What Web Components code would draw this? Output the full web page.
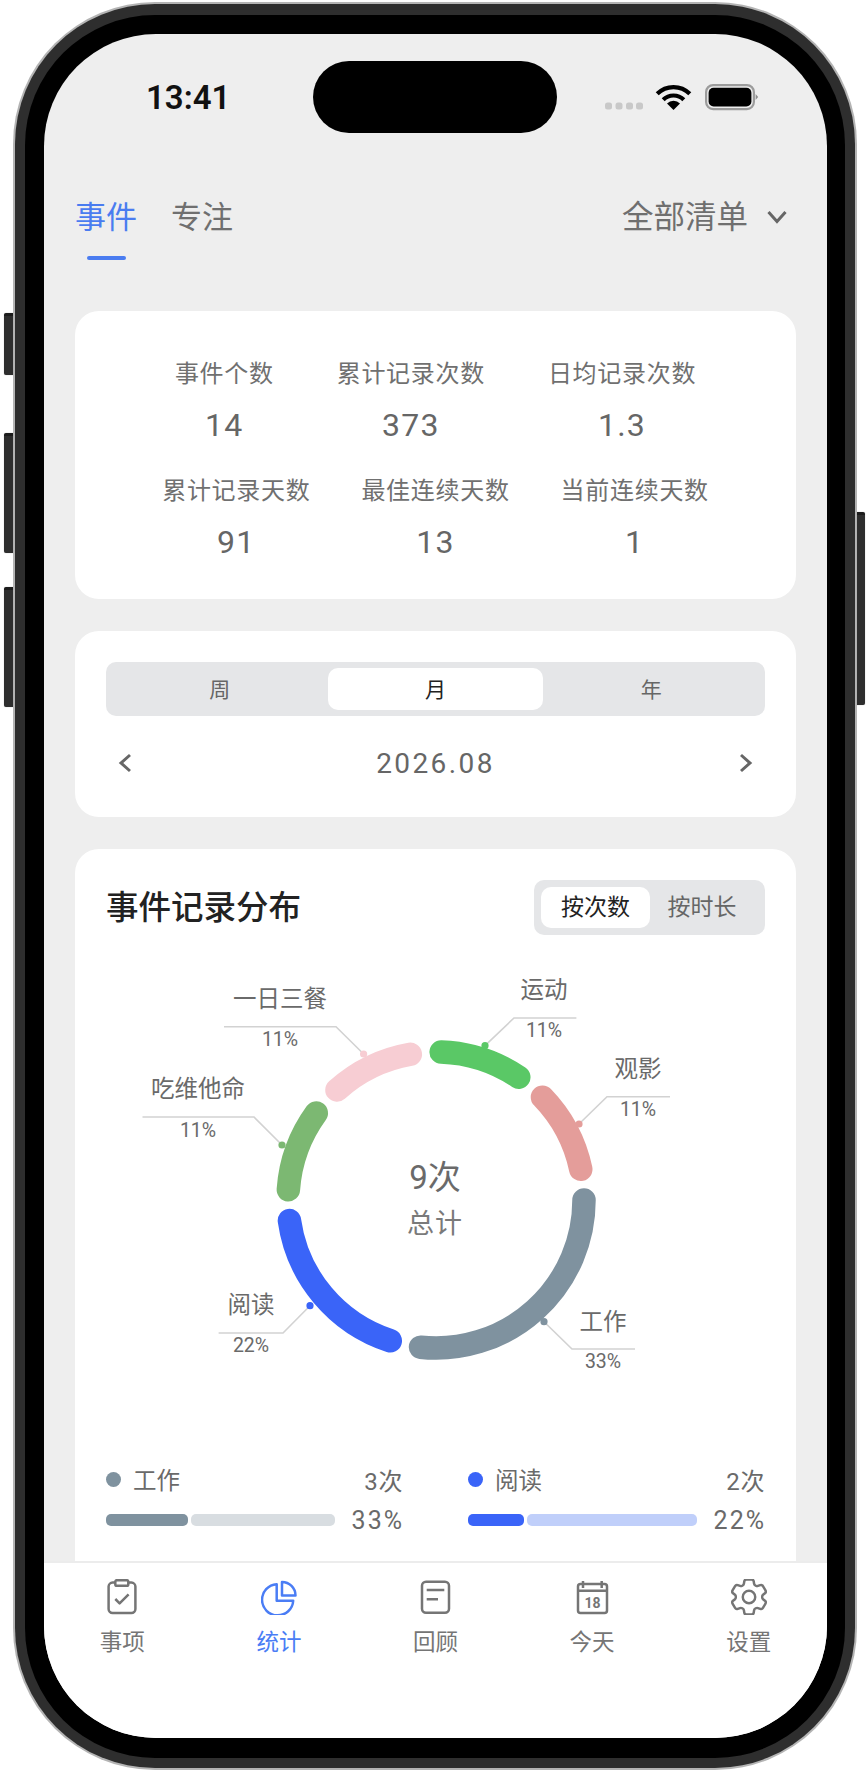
<!DOCTYPE html>
<html lang="zh-CN">
<head>
<meta charset="utf-8">
<title>统计</title>
<style>
  html, body {
    margin: 0;
    padding: 0;
    background: #fff;
    font-family: Roboto, "Noto Sans CJK SC", sans-serif;
  }
</style>
</head>
<body>
<phone-frame>
  <status-bar slot="head"></status-bar>
  <top-tabs slot="head"></top-tabs>
  <stats-card></stats-card>
  <period-card></period-card>
  <dist-card></dist-card>
  <tab-bar slot="footer"></tab-bar>
</phone-frame>

<script>
const FONT = `Roboto, "Noto Sans CJK SC", sans-serif`;

class PhoneFrame extends HTMLElement {
  constructor() {
    super();
    this.attachShadow({ mode: "open" });
    this.shadowRoot.innerHTML = `
      <style>
        :host {
          display: block;
          position: relative;
          width: 844px;
          height: 1768px;
          margin: 2px 0 0 13px;
          box-sizing: border-box;
          padding: 2px;
          border-radius: 142px;
          background: #b4b4b4;
        }
        .side {
          position: absolute;
          width: 9px;
          background: #2e2e2e;
          border-top: 3px solid #1c1c1c;
          box-sizing: border-box;
          box-shadow: 0 0 1px #999;
          border-radius: 2px 0 0 2px;
        }
        .side.l { left: -9px; }
        .side.r { right: -8px; width: 8px; border-radius: 0 2px 2px 0; }
        .dark {
          padding: 11px 10px 10px 10px;
          border-radius: 140px;
          background: #2e2e2e;
          height: 100%;
          box-sizing: border-box;
        }
        .black {
          padding: 19px 18px 19px 19px;
          border-radius: 130px;
          background: #000;
          height: 100%;
          box-sizing: border-box;
        }
        .screen {
          height: 1704px;
          border-radius: 112px;
          overflow: hidden;
          background: #eeeeee;
          display: flex;
          flex-direction: column;
        }
        .main {
          flex: 1;
          min-height: 0;
          overflow: hidden;
        }
        .cards {
          display: flex;
          flex-direction: column;
          gap: 32px;
          padding: 0 31px;
        }
      </style>
      <div class="side l" style="top:311px;height:62px"></div>
      <div class="side l" style="top:431px;height:120px"></div>
      <div class="side l" style="top:585px;height:120px"></div>
      <div class="side r" style="top:510px;height:193px"></div>
      <div class="dark"><div class="black"><div class="screen">
        <div class="main">
          <slot name="head"></slot>
          <div class="cards"><slot></slot></div>
        </div>
        <slot name="footer"></slot>
      </div></div></div>
    `;
  }
}

class StatusBar extends HTMLElement {
  constructor() {
    super();
    this.attachShadow({ mode: "open" });
    this.shadowRoot.innerHTML = `
      <style>
        :host {
          display: flex;
          height: 116px;
          box-sizing: border-box;
          padding: 27px 0 0 102px;
          font-family: ${FONT};
        }
        .time {
          width: 167px;
          height: 72px;
          line-height: 73px;
          font-size: 33px;
          font-weight: 600;
          color: #111;
        }
        .island {
          width: 244px;
          height: 72px;
          border-radius: 36px;
          background: #000;
        }
        svg { margin-left: 48px; display: block; }
      </style>
      <div class="time">13:41</div>
      <div class="island"></div>
      <svg width="156" height="72" viewBox="605 61 156 72">
        <g fill="#c8c8c8">
          <rect x="605" y="102.5" width="7" height="7" rx="2.5"/>
          <rect x="615.5" y="102.5" width="7" height="7" rx="2.5"/>
          <rect x="626" y="102.5" width="7" height="7" rx="2.5"/>
          <rect x="636" y="102.5" width="7" height="7" rx="2.5"/>
        </g>
        <g fill="none" stroke="#000" stroke-width="4.2">
          <path d="M657.2 93.8A23 23 0 0 1 689.8 93.8"/>
          <path d="M663.2 99.8A14.5 14.5 0 0 1 683.8 99.8"/>
        </g>
        <path d="M673.5 110L667 103.5A9.2 9.2 0 0 1 680 103.5Z" fill="#000"/>
        <rect x="706.1" y="85.1" width="47.8" height="24" rx="7" fill="none" stroke="#9c9c9c" stroke-width="2.2"/>
        <rect x="708.6" y="87.8" width="42.8" height="18.6" rx="5" fill="#000"/>
        <path d="M755.6 94L758.2 97L755.6 100Z" fill="#8c8c8c"/>
      </svg>
    `;
  }
}

class TopTabs extends HTMLElement {
  constructor() {
    super();
    this.attachShadow({ mode: "open" });
    this.shadowRoot.innerHTML = `
      <style>
        :host {
          display: flex;
          height: 161px;
          box-sizing: border-box;
          padding: 47px 39px 0 31px;
          font-family: ${FONT};
          font-size: 31px;
          line-height: 42px;
          color: #6f6f6f;
        }
        .tab { margin-right: 34px; display: flex; flex-direction: column; align-items: center; }
        .tab.on { color: #4a7cf0; }
        .tab.on::after {
          content: "";
          width: 39px;
          height: 4px;
          margin-top: 17px;
          border-radius: 2px;
          background: #4a7cf0;
        }
        .filter { margin-left: auto; display: flex; align-items: flex-start; gap: 18px; font-size: 31.5px; }
        svg { margin-top: 13px; }
      </style>
      <div class="tab on">事件</div>
      <div class="tab">专注</div>
      <div class="filter">全部清单
        <svg width="22" height="14" viewBox="0 0 22 14"><path d="M2.5 2L11 11.5L19.5 2" fill="none" stroke="#666" stroke-width="3"/></svg>
      </div>
    `;
  }
}

class CardBox extends HTMLElement {
  static css = `
    :host {
      display: block;
      background: #fff;
      border-radius: 24px;
      font-family: ${FONT};
      color: #666;
    }
  `;
}

class StatsCard extends CardBox {
  constructor() {
    super();
    this.attachShadow({ mode: "open" });
    const rows = [
      { gap: 63, items: [["事件个数", "14"], ["累计记录次数", "373"], ["日均记录次数", "1.3"]] },
      { gap: 51, items: [["累计记录天数", "91"], ["最佳连续天数", "13"], ["当前连续天数", "1"]] },
    ];
    this.shadowRoot.innerHTML = `
      <style>
        ${CardBox.css}
        :host {
          height: 288px;
          box-sizing: border-box;
          padding: 46px 0 0;
        }
        .row { display: flex; justify-content: center; margin-bottom: 29px; }
        .item { text-align: center; }
        .label { font-size: 24px; line-height: 34px; letter-spacing: 0.7px; color: #707070; }
        .value { font-size: 32px; font-weight: 440; line-height: 40px; margin-top: 14px; letter-spacing: 1.2px; color: #666; }
      </style>
      ${rows.map((r) => `
        <div class="row" style="gap:${r.gap}px">
          ${r.items.map(([l, v]) => `<div class="item"><div class="label">${l}</div><div class="value">${v}</div></div>`).join("")}
        </div>`).join("")}
    `;
  }
}

class SegControl extends HTMLElement {
  constructor() {
    super();
    this.attachShadow({ mode: "open" });
    this.shadowRoot.innerHTML = `
      <style>
        :host {
          display: flex;
          box-sizing: border-box;
          padding: 6px;
          border-radius: 10px;
          background: #e5e6e8;
          font-size: 21px;
          color: #666;
        }
        div { flex: 1; height: 42px; text-align: center; border-radius: 10px; line-height: 44px; }
        .on { background: #fff; color: #222; }
      </style>
    `;
  }

  connectedCallback() {
    const active = this.getAttribute("active");
    this.getAttribute("items").split(",").forEach((t) => {
      const d = document.createElement("div");
      d.textContent = t;
      if (t === active) d.className = "on";
      this.shadowRoot.appendChild(d);
    });
  }
}

class PeriodCard extends CardBox {
  constructor() {
    super();
    this.attachShadow({ mode: "open" });
    this.shadowRoot.innerHTML = `
      <style>
        ${CardBox.css}
        :host { height: 186px; box-sizing: border-box; padding: 31px; }
        .date {
          display: flex;
          justify-content: space-between;
          align-items: center;
          height: 40px;
          margin-top: 27px;
          padding: 0 12px;
          font-size: 28px;
          font-weight: 440;
          letter-spacing: 2.4px;
          color: #666;
        }
      </style>
      <seg-control items="周,月,年" active="月"></seg-control>
      <div class="date">
        <svg width="14" height="20" viewBox="0 0 14 20"><path d="M12 2L3 10L12 18" fill="none" stroke="#666" stroke-width="3"/></svg>
        <span>2026.08</span>
        <svg width="14" height="20" viewBox="0 0 14 20"><path d="M2 2L11 10L2 18" fill="none" stroke="#666" stroke-width="3"/></svg>
      </div>
    `;
  }
}

class DonutChart extends HTMLElement {
  constructor() {
    super();
    this.attachShadow({ mode: "open" });
    const cx = 436, cy = 1200, r = 148;
    const pt = (a) => {
      const t = (a * Math.PI) / 180;
      return `${(cx + r * Math.cos(t)).toFixed(2)} ${(cy + r * Math.sin(t)).toFixed(2)}`;
    };
    const data = [
      { name: "工作", pct: "33%", color: "#7f929f", from: 0, to: 96, dot: [544, 1321.7], knee: [572, 1349], end: 635, lx: 603, ly: 1322, py: 1361 },
      { name: "阅读", pct: "22%", color: "#3a64f8", from: 108, to: 172, dot: [310, 1305.7], knee: [283, 1333], end: 218.6, lx: 251, ly: 1305, py: 1345 },
      { name: "吃维他命", pct: "11%", color: "#7cb872", from: 184, to: 216, dot: [282, 1145], knee: [254, 1117], end: 142.5, lx: 198, ly: 1089, py: 1130 },
      { name: "一日三餐", pct: "11%", color: "#f7cdd3", from: 228, to: 260, dot: [363.6, 1054], knee: [336, 1026.7], end: 224, lx: 280, ly: 999, py: 1039 },
      { name: "运动", pct: "11%", color: "#5ac866", from: 272, to: 304, dot: [485, 1045.7], knee: [514, 1018], end: 576.4, lx: 544, ly: 990, py: 1030 },
      { name: "观影", pct: "11%", color: "#e49d9a", from: 316, to: 348, dot: [579, 1124], knee: [607, 1096.7], end: 670, lx: 638, ly: 1069, py: 1109 },
    ];
    this.shadowRoot.innerHTML = `
      <style>
        :host { display: block; height: 529px; }
        svg { display: block; }
        text { font-family: ${FONT}; text-anchor: middle; dominant-baseline: central; fill: #6a6a6a; }
        .name { font-size: 23.5px; }
        .pct { font-size: 19.5px; }
        .big { font-size: 33px; font-weight: 440; }
        .sub { font-size: 27px; letter-spacing: 1px; fill: #7a7a7a; }
      </style>
      <svg width="659" height="529" viewBox="106 935 659 529">
        ${data.map((d) => `
          <path d="M${pt(d.from)}A${r} ${r} 0 0 1 ${pt(d.to)}" fill="none" stroke="${d.color}" stroke-width="23.5" stroke-linecap="round"/>
          <path d="M${d.dot[0]} ${d.dot[1]}L${d.knee[0]} ${d.knee[1]}H${d.end}" fill="none" stroke="#d2d2d2" stroke-width="1.6"/>
          <circle cx="${d.dot[0]}" cy="${d.dot[1]}" r="3.6" fill="${d.color}"/>
          <text class="name" x="${d.lx}" y="${d.ly}">${d.name}</text>
          <text class="pct" x="${d.lx}" y="${d.py}">${d.pct}</text>
        `).join("")}
        <text class="big" x="435" y="1177">9次</text>
        <text class="sub" x="435" y="1224">总计</text>
      </svg>
    `;
  }
}

class LegendItem extends HTMLElement {
  constructor() {
    super();
    this.attachShadow({ mode: "open" });
    const color = this.getAttribute("color");
    const light = this.getAttribute("light");
    this.shadowRoot.innerHTML = `
      <style>
        :host { display: block; font-size: 23.5px; color: #6a6a6a; }
        .top { display: flex; align-items: center; height: 30px; }
        .dot { width: 15px; height: 15px; border-radius: 50%; background: ${color}; margin-right: 12px; }
        .count { margin-left: auto; letter-spacing: 0.6px; font-size: 24px; }
        .bottom { display: flex; align-items: center; margin-top: 11px; height: 30px; }
        .bar { width: 229px; height: 12px; display: flex; gap: 2.5px; }
        .bar i { display: block; border-radius: 5px; }
        .fill { background: ${color}; width: ${this.getAttribute("fill")}%; }
        .rest { background: ${light}; flex: 1; }
        .pct { margin-left: auto; font-size: 25px; letter-spacing: 2px; margin-right: -1px; }
      </style>
      <div class="top"><span class="dot"></span><slot></slot><span class="count">${this.getAttribute("count")}</span></div>
      <div class="bottom">
        <div class="bar"><i class="fill"></i><i class="rest"></i></div>
        <span class="pct">${this.getAttribute("pct")}</span>
      </div>
    `;
  }
}

class DistCard extends CardBox {
  constructor() {
    super();
    this.attachShadow({ mode: "open" });
    this.shadowRoot.innerHTML = `
      <style>
        ${CardBox.css}
        :host { padding: 31px; padding-bottom: 60px; border-radius: 24px; }
        .head { display: flex; justify-content: space-between; align-items: center; height: 55px; }
        h2 { margin: -7px 0 0; font-size: 32.5px; font-weight: 500; color: #222; }
        .toggle {
          display: flex;
          box-sizing: border-box;
          width: 231px;
          height: 55px;
          padding: 7px 11px 7px 7px;
          border-radius: 10px;
          background: #e5e6e8;
          font-size: 23px;
          line-height: 41px;
        }
        .toggle span { text-align: center; }
        .toggle .on { width: 109px; background: #fff; border-radius: 10px; color: #222; }
        .toggle .off { flex: 1; color: #666; }
        .legend { display: grid; grid-template-columns: 297px 297px; gap: 65px; }
      </style>
      <div class="head">
        <h2>事件记录分布</h2>
        <div class="toggle"><span class="on">按次数</span><span class="off">按时长</span></div>
      </div>
      <donut-chart></donut-chart>
      <div class="legend">
        <legend-item color="#7f929f" light="#d8dde1" count="3次" pct="33%" fill="36">工作</legend-item>
        <legend-item color="#3a64f8" light="#c0cffa" count="2次" pct="22%" fill="24.5">阅读</legend-item>
      </div>
    `;
  }
}

const NAV_ICONS = {
  clipboard: `<rect x="4.6" y="3.6" width="26.8" height="30.4" rx="4"/><rect x="11.3" y="1.2" width="13" height="5.6" rx="1.6" fill="#fff"/><path d="M11.3 20L15.6 24.3L24.6 15.3"/>`,
  pie: `<path d="M15.7 5.2V21.7H32.2A15.6 15.6 0 1 1 15.7 5.2Z"/><path d="M21 3A13.5 13.5 0 0 1 34.5 16.5H21Z"/>`,
  doc: `<rect x="5" y="2.7" width="27" height="31" rx="4"/><path d="M9.7 11H27.3M9.7 20.3H21"/>`,
  calendar: `<rect x="4" y="5" width="29" height="29" rx="2.5"/><path d="M4 11.7H33M9 2V9M27.7 2V9"/><text x="18.5" y="28.7" text-anchor="middle" font-size="14" font-weight="700" fill="currentColor" stroke="none" font-family="Roboto">18</text>`,
  gear: `<g transform="translate(-5.4 -5.4) scale(1.95)" stroke-width="1.26"><path d="M9.594 3.94c.09-.542.56-.94 1.11-.94h2.593c.55 0 1.02.398 1.11.94l.213 1.281c.063.374.313.686.645.87.074.04.147.083.22.127.325.196.72.257 1.075.124l1.217-.456a1.125 1.125 0 0 1 1.37.49l1.296 2.247a1.125 1.125 0 0 1-.26 1.431l-1.003.827c-.293.241-.438.613-.43.992a7.723 7.723 0 0 1 0 .255c-.008.378.137.75.43.991l1.004.827c.424.35.534.955.26 1.43l-1.298 2.247a1.125 1.125 0 0 1-1.369.491l-1.217-.456c-.355-.133-.75-.072-1.076.124a6.47 6.47 0 0 1-.22.128c-.331.183-.581.495-.644.869l-.213 1.281c-.09.543-.56.94-1.11.94h-2.594c-.55 0-1.019-.398-1.11-.94l-.213-1.281c-.062-.374-.312-.686-.644-.87a6.52 6.52 0 0 1-.22-.127c-.325-.196-.72-.257-1.076-.124l-1.217.456a1.125 1.125 0 0 1-1.369-.49l-1.297-2.247a1.125 1.125 0 0 1 .26-1.431l1.004-.827c.292-.24.437-.613.43-.991a6.932 6.932 0 0 1 0-.255c.007-.38-.138-.751-.43-.992l-1.004-.827a1.125 1.125 0 0 1-.26-1.43l1.297-2.247a1.125 1.125 0 0 1 1.37-.491l1.216.456c.356.133.751.072 1.076-.124.072-.044.146-.086.22-.128.332-.183.582-.495.644-.869l.214-1.28Z"/><circle cx="12" cy="12" r="3.2"/></g>`,
};

class NavItem extends HTMLElement {
  constructor() {
    super();
    this.attachShadow({ mode: "open" });
    this.shadowRoot.innerHTML = `
      <style>
        :host {
          display: flex;
          flex: 1;
          flex-direction: column;
          align-items: center;
          color: #757575;
          font-size: 22.5px;
          line-height: 30px;
        }
        :host([active]) { color: #4a7df5; }
        svg { display: block; margin-bottom: 12px; }
      </style>
      <svg width="36" height="36" viewBox="0 0 36 36" fill="none" stroke="currentColor" stroke-width="2.5" stroke-linejoin="round">
        ${NAV_ICONS[this.getAttribute("icon")]}
      </svg>
      <slot></slot>
    `;
  }
}

class TabBar extends HTMLElement {
  constructor() {
    super();
    this.attachShadow({ mode: "open" });
    this.shadowRoot.innerHTML = `
      <style>
        :host {
          display: flex;
          flex: none;
          height: 177px;
          box-sizing: border-box;
          padding-top: 16px;
          background: #fff;
          border-top: 2px solid #ececec;
          font-family: ${FONT};
        }
      </style>
      <nav-item icon="clipboard">事项</nav-item>
      <nav-item icon="pie" active>统计</nav-item>
      <nav-item icon="doc">回顾</nav-item>
      <nav-item icon="calendar">今天</nav-item>
      <nav-item icon="gear">设置</nav-item>
    `;
  }
}

customElements.define("phone-frame", PhoneFrame);
customElements.define("status-bar", StatusBar);
customElements.define("top-tabs", TopTabs);
customElements.define("stats-card", StatsCard);
customElements.define("seg-control", SegControl);
customElements.define("period-card", PeriodCard);
customElements.define("donut-chart", DonutChart);
customElements.define("legend-item", LegendItem);
customElements.define("dist-card", DistCard);
customElements.define("nav-item", NavItem);
customElements.define("tab-bar", TabBar);
</script>
</body>
</html>
